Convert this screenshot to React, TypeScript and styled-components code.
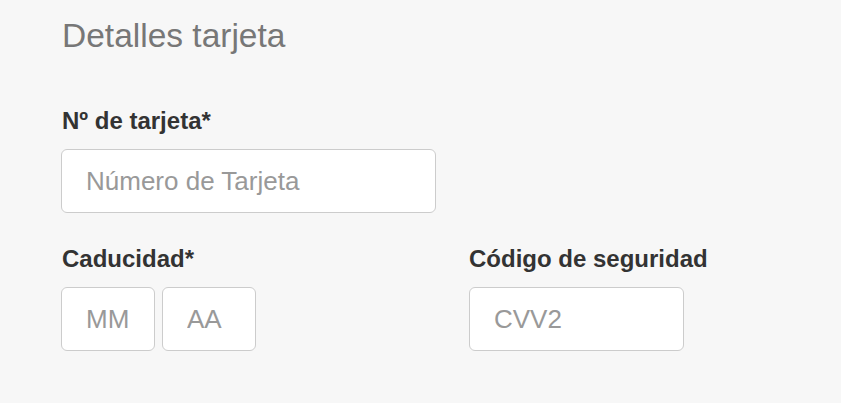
import styled, { createGlobalStyle } from "styled-components";

const GlobalStyle = createGlobalStyle`
  html, body {
    margin: 0;
    padding: 0;
    background: #f7f7f7;
  }
  body {
    font-family: "Liberation Sans", Arial, sans-serif;
  }
`;

const CardDetailsWrapper = styled.section`
  box-sizing: border-box;
  width: 841px;
  min-height: 403px;
  padding: 17px 61px 0;
  background: #f7f7f7;
`;

const SectionTitle = styled.h2`
  margin: 0 0 52px;
  padding-left: 1px;
  font-size: 33.5px;
  line-height: 37px;
  font-weight: 400;
  color: #777777;
`;

const FieldGroup = styled.div`
  display: flex;
  flex-direction: column;
`;

const FieldRow = styled.div`
  display: grid;
  grid-template-columns: 408px auto;
  margin-top: 31px;
`;

const FieldLabel = styled.label<{ flush?: boolean }>`
  display: block;
  margin-bottom: 14px;
  padding-left: ${({ flush }) => (flush ? "0" : "1px")};
  font-size: 24px;
  line-height: 29px;
  font-weight: 700;
  color: #333333;
`;

const InputsInline = styled.div`
  display: flex;
  gap: 7px;
`;

const TextInput = styled.input<{ w: number }>`
  box-sizing: border-box;
  width: ${({ w }) => w}px;
  height: 64px;
  padding: 0 24px;
  background: #ffffff;
  border: 1px solid #cccccc;
  border-radius: 6px;
  font-family: "Liberation Sans", Arial, sans-serif;
  font-size: 26px;
  color: #333333;
  outline: none;

  &::placeholder {
    color: #999999;
  }
`;

export default function App() {
  return (
    <>
      <GlobalStyle />
      <CardDetailsWrapper>
        <SectionTitle>Detalles tarjeta</SectionTitle>

        <FieldGroup>
          <FieldLabel>Nº de tarjeta*</FieldLabel>
          <TextInput w={375} placeholder="Número de Tarjeta" />
        </FieldGroup>

        <FieldRow>
          <FieldGroup>
            <FieldLabel>Caducidad*</FieldLabel>
            <InputsInline>
              <TextInput w={94} placeholder="MM" />
              <TextInput w={94} placeholder="AA" />
            </InputsInline>
          </FieldGroup>
          <FieldGroup>
            <FieldLabel flush>Código de seguridad</FieldLabel>
            <TextInput w={215} placeholder="CVV2" />
          </FieldGroup>
        </FieldRow>
      </CardDetailsWrapper>
    </>
  );
}
